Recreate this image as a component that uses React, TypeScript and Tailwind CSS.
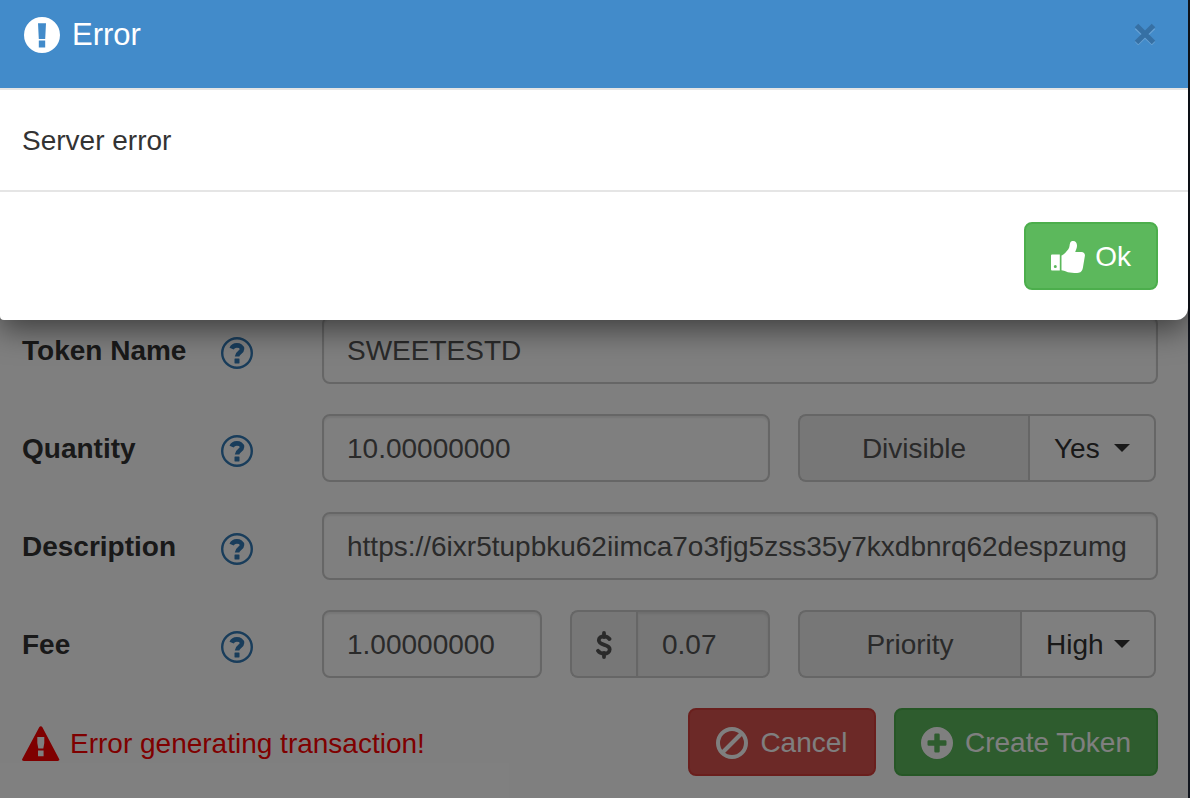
import type { ReactNode } from 'react'

const HelpIcon = () => (
    <svg className="size-8" viewBox="0 0 32 32" fill="none" aria-hidden="true">
        <circle cx="16" cy="16" r="14.8" stroke="currentColor" strokeWidth="2.4"/>
        <path d="M10.600 11.600c1-2.200 2.800-3.200 5.200-3.200 3 0 5.200 1.400 5.200 3.700 0 3.400-4.900 3.500-4.900 7.300" stroke="currentColor" strokeWidth="4.600"/>
        <rect x="13.500" y="21.600" width="5" height="4.800" rx=".4" fill="currentColor"/>
    </svg>
)

const ExclamationIcon = () => (
    <svg className="size-9" viewBox="0 0 36 36" fill="currentColor" fillRule="evenodd" aria-hidden="true">
        <path d="M18 0a18 18 0 1 1 0 36a18 18 0 1 1 0-36zM14 6.300l.8 15.700h6.400l.8-15.700zM14.800 23.600v7h6.400v-7z"/>
    </svg>
)

const ThumbsUpIcon = () => (
    <svg className="w-[34px] h-8" viewBox="0 0 34 32" fill="currentColor" fillRule="evenodd" aria-hidden="true">
        <path d="M1 13.500h7.800v16H1a1 1 0 0 1-1-1v-14a1 1 0 0 1 1-1zM4.300 24a1.500 1.500 0 1 0 0 3a1.500 1.500 0 1 0 0-3z"/>
        <path d="M10.500 14.500c2.500-.8 5-4 6.800-6.300 1.800-2.300.9-4.500 2-6.700C20 .2 21 0 22.200 0c2.300 0 3.800 2 3.800 4.500 0 2.300-.9 4-1.800 6.500h6.300c2.200 0 3.700 1.600 3.400 3.800l-2 12c-.4 2.600-1.600 4.700-4.300 5-4.600.5-9 .1-12.600-1.300-1.600-.6-2.600-1.200-4.500-1.300z"/>
    </svg>
)

const WarningIcon = () => (
    <svg className="w-[38px] h-9" viewBox="0 0 38 36" fill="currentColor" fillRule="evenodd" aria-hidden="true">
        <path d="M17.200 1.200c.8-1.400 2.400-1.400 3.200 0l16.600 31.500c.8 1.500.2 2.300-1.400 2.300H1.800C.2 35-.4 34.200.4 32.700zM15.300 11v6l1 5.500h5l1-5.500v-6zM16 24.500v5.800h5.600v-5.800z"/>
    </svg>
)

const BanIcon = () => (
    <svg className="size-8" viewBox="0 0 32 32" fill="none" stroke="currentColor" strokeWidth="4" aria-hidden="true">
        <circle cx="16" cy="16" r="14"/>
        <path d="M6.500 25.500l19-19"/>
    </svg>
)

const PlusIcon = () => (
    <svg className="size-8" viewBox="0 0 32 32" fill="currentColor" fillRule="evenodd" aria-hidden="true">
        <path d="M16 0a16 16 0 1 1 0 32a16 16 0 1 1 0-32zM14.500 6.500a1.200 1.200 0 0 0-1.200 1.200v5.600H7.700a1.200 1.200 0 0 0-1.200 1.200v3a1.200 1.200 0 0 0 1.200 1.200h5.600v5.600a1.200 1.200 0 0 0 1.200 1.200h3a1.200 1.200 0 0 0 1.200-1.200v-5.600h5.600a1.200 1.200 0 0 0 1.200-1.200v-3a1.200 1.200 0 0 0-1.200-1.200h-5.600V7.700a1.200 1.200 0 0 0-1.200-1.200z"/>
    </svg>
)

const DollarIcon = () => (
    <svg className="w-4 h-7" viewBox="0 0 16 28" fill="none" stroke="currentColor" strokeWidth="3.800" strokeLinecap="round" aria-hidden="true">
        <path d="M8 2v4M8 22v4"/>
        <path d="M13.500 8C12 6 10.300 5.300 8 5.300c-3 0-5.200 1.500-5.200 4 0 5.800 10.900 3.300 10.900 9 0 2.800-2.300 4.400-5.500 4.400-2.600 0-4.800-.8-6.200-2.900"/>
    </svg>
)

const Caret = () => (
    <svg className="pointer-events-none absolute right-[26px] top-[30px] w-4 h-2" viewBox="0 0 16 8" fill="#333" aria-hidden="true">
        <path d="M0 0h16L8 8z"/>
    </svg>
)

const field = 'h-[68px] w-full min-w-0 rounded-lg border-2 border-[#ccc] bg-white px-[23px] pt-0.5 text-[#555] shadow-[inset_0_2px_2px_rgba(0,0,0,0.075)] outline-none'
const addon = 'flex items-center justify-center rounded-l-lg border-2 border-r-0 border-[#ccc] bg-[#eee] pt-0.5 text-[#555]'
const select = 'h-[68px] appearance-none rounded-r-lg border-2 border-[#ccc] bg-white pt-0.5 pl-6 text-[#333]'
const btn = 'flex h-[68px] items-center justify-center rounded-lg border-2 px-[25px] pt-0.5 text-white'

const Row = ({ id, label, children }: { id: string; label: string; children: ReactNode }) => (
    <div className="flex h-[68px] items-center">
        <label htmlFor={id} className="w-[199px] shrink-0 pt-0.5 font-bold text-[#333]">{label}</label>
        <button type="button" aria-label={'Help for ' + label} className="mr-[69px] mt-1.5 shrink-0 text-[#337ab7]">
            <HelpIcon/>
        </button>
        <div className="min-w-0 flex-1">{children}</div>
    </div>
)

const App = () => {
    return (
        <main className="relative min-h-screen bg-[#222b3a] pr-0.5 font-['Liberation_Sans',Arial,sans-serif] text-[28px] leading-10">
            {/* issue token form */}
            <form className="flex min-h-screen flex-col gap-[30px] bg-white pt-[316px] pr-[30px] pb-[22px] pl-[22px]">
                <Row id="name" label="Token Name">
                    <input id="name" className={field} defaultValue="SWEETESTD"/>
                </Row>
                <Row id="quantity" label="Quantity">
                    <div className="grid grid-cols-[56fr_45fr] gap-7">
                        <input id="quantity" className={field} defaultValue="10.00000000"/>
                        <div className="mr-0.5 flex">
                            <label htmlFor="divisible" className={addon + ' flex-1'}>Divisible</label>
                            <div className="relative">
                                <select id="divisible" className={select + ' w-32'}>
                                    <option>Yes</option>
                                    <option>No</option>
                                </select>
                                <Caret/>
                            </div>
                        </div>
                    </div>
                </Row>
                <Row id="description" label="Description">
                    <input id="description" className={field} defaultValue="https://6ixr5tupbku62iimca7o3fjg5zss35y7kxdbnrq62despzumg"/>
                </Row>
                <Row id="fee" label="Fee">
                    <div className="grid grid-cols-[11fr_10fr_18fr] gap-7">
                        <input id="fee" className={field} defaultValue="1.00000000"/>
                        <div className="flex">
                            <label htmlFor="usd" aria-label="US dollars" className={addon + ' w-[66px] shrink-0'}><DollarIcon/></label>
                            <input id="usd" readOnly className="h-[68px] w-full min-w-0 rounded-r-lg border-2 border-[#ccc] bg-[#eee] px-6 pt-0.5 text-[#555] shadow-[inset_0_2px_2px_rgba(0,0,0,0.075)]" value="0.07"/>
                        </div>
                        <div className="mr-0.5 flex">
                            <label htmlFor="priority" className={addon + ' flex-1'}>Priority</label>
                            <div className="relative">
                                <select id="priority" className={select + ' w-[136px]'} defaultValue="High">
                                    <option>Low</option>
                                    <option>High</option>
                                </select>
                                <Caret/>
                            </div>
                        </div>
                    </div>
                </Row>
                <div className="flex items-center gap-[18px]">
                    <p className="mr-auto flex items-center gap-2.5 pt-1 text-[#f00]">
                        <WarningIcon/>
                        Error generating transaction!
                    </p>
                    <button type="button" className={btn + ' w-[188px] gap-3 border-[#d43f3a] bg-[#d9534f]'}>
                        <BanIcon/>
                        Cancel
                    </button>
                    <button type="button" className={btn + ' gap-3 border-[#4cae4c] bg-[#5cb85c]'}>
                        <PlusIcon/>
                        Create Token
                    </button>
                </div>
            </form>

            {/* backdrop */}
            <div className="absolute inset-0 bg-black/50"></div>

            {/* error dialog */}
            <div role="dialog" aria-labelledby="dialog-title" className="absolute top-0 right-0.5 left-0 rounded-br-xl rounded-bl-sm bg-white shadow-[0_10px_30px_rgba(0,0,0,0.5)]">
                <header className="flex h-[90px] items-start justify-between border-b-2 border-[#e5e5e5] bg-[#428bca] pt-[15px] pr-8 pl-6">
                    <h1 id="dialog-title" className="flex items-center gap-3 text-[31px] text-white">
                        <ExclamationIcon/>
                        Error
                    </h1>
                    <button type="button" aria-label="Close" className="mt-2">
                        <svg className="size-[22px]" viewBox="0 0 22 22" fill="none" strokeWidth="5" aria-hidden="true">
                            <path d="M2.500 4.500l17 16M19.500 4.500l-17 16" stroke="#fff" strokeOpacity=".2"/>
                            <path d="M2.500 2.500l17 17M19.500 2.500l-17 17" stroke="#3670a4"/>
                        </svg>
                    </button>
                </header>
                <p className="border-b-2 border-[#e5e5e5] px-[22px] pt-[31px] pb-[29px] text-[#333]">Server error</p>
                <footer className="flex justify-end p-[30px]">
                    <button type="button" className={btn + ' gap-2.5 border-[#4cae4c] bg-[#5cb85c]'}>
                        <ThumbsUpIcon/>
                        Ok
                    </button>
                </footer>
            </div>
        </main>
    );
};

export default App;
